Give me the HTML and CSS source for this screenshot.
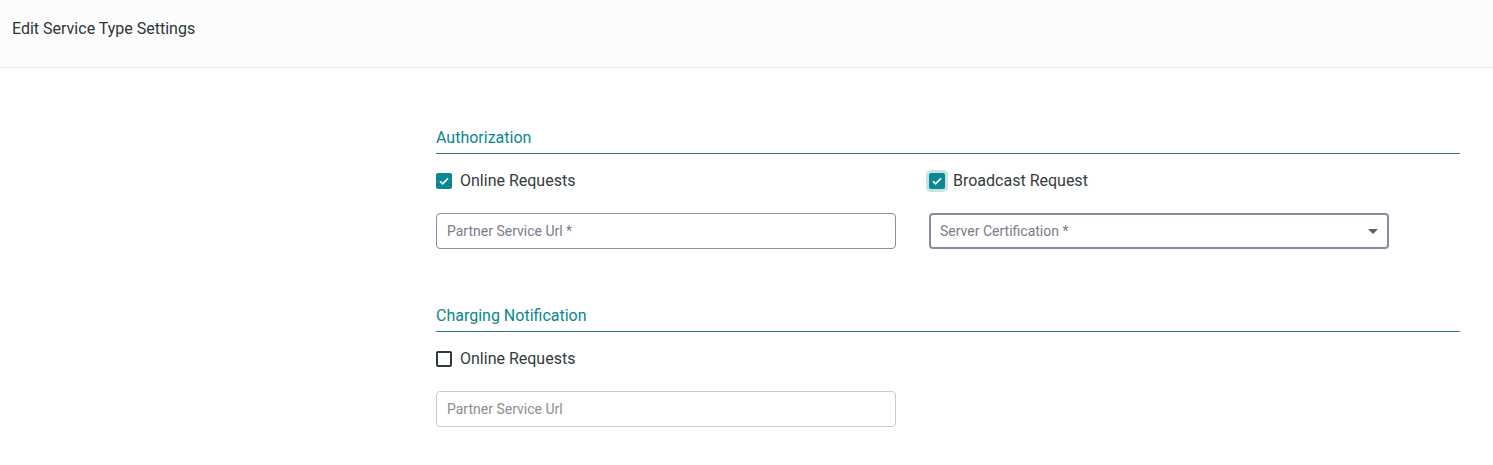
FILE: index.html
```html
<!DOCTYPE html>
<html>
<head>
    <link rel="stylesheet" href="styles.css">
</head>
<body>
    <div class="page-header">
        <span class="page-title">Edit Service Type Settings</span>
    </div>

    <div class="settings">
        <section class="group">
            <h3 class="group-title">Authorization</h3>
            <div class="group-grid">
                <div class="field-col">
                    <label class="check">
                        <span class="box checked">
                            <svg viewBox="0 0 16 16" width="16" height="16"><path d="M4 8.2l2.6 2.6L12 5.4" fill="none" stroke="#fff" stroke-width="1.6"/></svg>
                        </span>
                        Online Requests
                    </label>
                    <div class="input">Partner Service Url *</div>
                </div>
                <div class="field-col">
                    <label class="check">
                        <span class="box checked focused">
                            <svg viewBox="0 0 16 16" width="16" height="16"><path d="M4 8.2l2.6 2.6L12 5.4" fill="none" stroke="#fff" stroke-width="1.6"/></svg>
                        </span>
                        Broadcast Request
                    </label>
                    <div class="input select">
                        <span>Server Certification *</span>
                        <span class="caret"></span>
                    </div>
                </div>
            </div>
        </section>

        <section class="group">
            <h3 class="group-title">Charging Notification</h3>
            <div class="group-grid">
                <div class="field-col">
                    <label class="check">
                        <span class="box"></span>
                        Online Requests
                    </label>
                    <div class="input disabled">Partner Service Url</div>
                </div>
            </div>
        </section>
    </div>
</body>
</html>
```

FILE: styles.css
```css
body {
    margin: 0;
    font-family: Roboto, "Liberation Sans", sans-serif;
    color: #333a3d;
    background: #fff;
}

.page-header {
    height: 68px;
    display: flex;
    align-items: center;
    padding: 0 12px;
    background: #fcfcfc;
    border-bottom: 1px solid #dcecee;
    box-sizing: border-box;
}

.page-title {
    font-size: 16px;
    color: #2f3436;
    margin-top: -11px;
}

.settings {
    width: 1024px;
    margin-left: 436px;
    padding-top: 60px;
}

.group {
    margin-bottom: 57px;
}

.group-title {
    margin: 0;
    font-size: 16px;
    font-weight: 400;
    color: #0b8690;
    line-height: 20px;
    padding-bottom: 5px;
    border-bottom: 1px solid #2b7480;
}

.group-grid {
    display: grid;
    grid-template-columns: 493px 460px;
    padding-top: 18px;
}

.check {
    display: flex;
    align-items: center;
    gap: 8px;
    font-size: 16px;
    line-height: 18px;
    color: #343b3e;
    height: 18px;
}

.box {
    width: 16px;
    height: 16px;
    box-sizing: border-box;
    border: 2px solid #2f3a3d;
    border-radius: 2px;
    display: flex;
}

.box.checked {
    border: none;
    background: #0d8893;
}

.box.focused {
    box-shadow: 0 0 0 3px #c6e4e6;
}

.input {
    margin-top: 23px;
    width: 460px;
    height: 36px;
    box-sizing: border-box;
    border: 1px solid #8c8ca2;
    border-radius: 4px;
    padding: 0 10px;
    display: flex;
    align-items: center;
    font-size: 14px;
    color: #7b7b8c;
}

.input.select {
    border: 2px solid #8a8aa0;
    justify-content: space-between;
    padding: 0 9px 0 9px;
}

.input.disabled {
    border-color: #cbcbcb;
    color: #8e8e8e;
}

.caret {
    width: 0;
    height: 0;
    border-left: 5px solid transparent;
    border-right: 5px solid transparent;
    border-top: 5px solid #5f5f66;
}
```
